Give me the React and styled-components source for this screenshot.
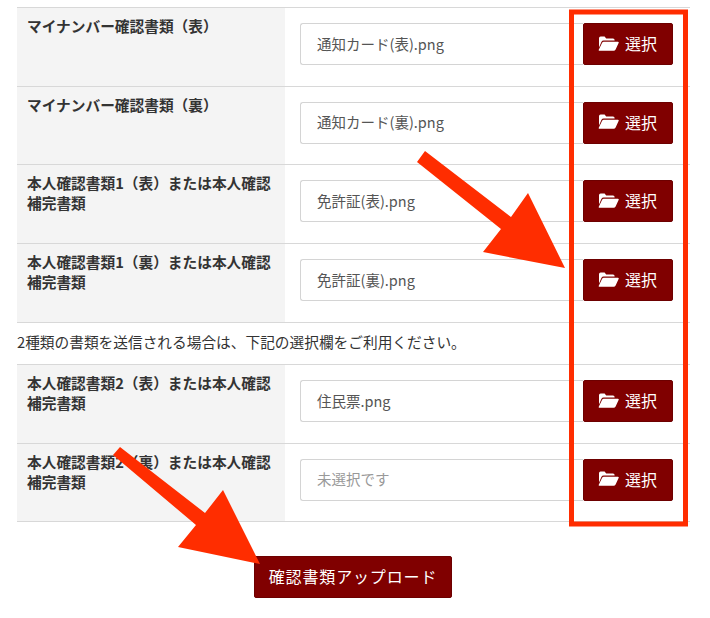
import React from "react";
import styled, { createGlobalStyle } from "styled-components";

const GlobalStyle = createGlobalStyle`
  html, body {
    margin: 0;
    padding: 0;
    background: #fff;
  }
  body {
    font-family: "Noto Sans CJK JP", "Liberation Sans", sans-serif;
    color: #333;
  }
`;

const Page = styled.div`
  position: relative;
  width: 710px;
  height: 618px;
  overflow: hidden;
  box-sizing: border-box;
  padding: 7px 20px 0 17px;
`;

const Row = styled.div`
  display: grid;
  grid-template-columns: 268px 1fr;
  height: 78.7px;
  box-sizing: border-box;
  border-top: 1px solid #d8d8d8;
  &.last {
    height: 79.2px;
    border-bottom: 1px solid #d8d8d8;
  }
`;

const Label = styled.div`
  background: #f4f4f4;
  padding: 8px 10px 0;
  font-size: 14.7px;
  line-height: 20px;
  font-weight: 700;
  color: #333;
`;

const Field = styled.div`
  display: flex;
  align-items: flex-start;
  padding: 15px 17px 0 15px;
`;

const FileName = styled.div`
  flex: 1;
  height: 42px;
  box-sizing: border-box;
  padding: 0 16px 2px;
  display: flex;
  align-items: center;
  border: 1px solid #d4d4d4;
  border-right: 0;
  border-radius: 3px 0 0 3px;
  font-size: 14.5px;
  color: ${(props) => (props.$empty ? "#999" : "#555")};
`;

const Button = styled.button`
  display: inline-flex;
  align-items: center;
  justify-content: center;
  height: 42px;
  box-sizing: border-box;
  padding: 0 0 2px;
  border: 1px solid #6d0000;
  border-radius: 2px;
  background: #800000;
  color: #fff;
  font-family: inherit;
  font-size: 16px;
  line-height: 1;
`;

const PickButton = styled(Button)`
  width: 90px;
  gap: 6px;
  svg {
    width: 21px;
    height: 17px;
    margin-left: -1px;
  }
`;

const Note = styled.div`
  height: 42.4px;
  box-sizing: border-box;
  border-top: 1px solid #d8d8d8;
  padding-bottom: 3px;
  display: flex;
  align-items: center;
  font-size: 14.7px;
  color: #333;
`;

const Actions = styled.div`
  display: flex;
  justify-content: center;
  padding: 33.9px 2px 0 0;
`;

const UploadButton = styled(Button)`
  width: 198px;
  padding-left: 1px;
  letter-spacing: 0.85px;
`;

// red marks drawn over the page in the screenshot
const Marks = styled.svg`
  position: absolute;
  left: 0;
  top: 0;
  pointer-events: none;
`;

const FolderIcon = () => (
  <svg viewBox="0 0 21 17" fill="#fff" aria-hidden="true">
    <path d="M1 12.5V3.2Q1 1.6 2.6 1.6H6.6L8.2 3.4H15Q16.6 3.4 16.6 5V5.6H5.6Q4.2 5.6 3.5 6.8Z" />
    <path d="M5.8 6.8H19.8Q21.2 6.8 20.6 8L17.6 14.6Q17 15.8 15.6 15.8H1.6Q0.3 15.8 0.9 14.6L4 8Q4.6 6.8 5.8 6.8Z" />
  </svg>
);

const rows = [
  { label: "マイナンバー確認書類（表）", file: "通知カード(表).png" },
  { label: "マイナンバー確認書類（裏）", file: "通知カード(裏).png" },
  { label: "本人確認書類1（表）または本人確認補完書類", file: "免許証(表).png" },
  { label: "本人確認書類1（裏）または本人確認補完書類", file: "免許証(裏).png" },
];

const extraRows = [
  { label: "本人確認書類2（表）または本人確認補完書類", file: "住民票.png" },
  { label: "本人確認書類2（裏）または本人確認補完書類", file: "" },
];

const DocRow = ({ label, file, className }) => (
  <Row className={className}>
    <Label>{label}</Label>
    <Field>
      <FileName $empty={!file}>{file || "未選択です"}</FileName>
      <PickButton>
        <FolderIcon />
        選択
      </PickButton>
    </Field>
  </Row>
);

export default function App() {
  return (
    <>
      <GlobalStyle />
      <Page>
        {rows.map((row) => (
          <DocRow key={row.label} {...row} />
        ))}
        <Note>2種類の書類を送信される場合は、下記の選択欄をご利用ください。</Note>
        <DocRow {...extraRows[0]} />
        <DocRow {...extraRows[1]} className="last" />
        <Actions>
          <UploadButton>確認書類アップロード</UploadButton>
        </Actions>
        <Marks width="710" height="618" viewBox="0 0 710 618">
          <rect x="571.5" y="12" width="114" height="512" fill="none" stroke="#ff2d00" strokeWidth="5" />
          <polygon
            fill="#ff2d00"
            points="425,151 511,217 528,193 565,268 483,252 501,229 417,162"
          />
          <polygon
            fill="#ff2d00"
            points="120,447 205,513 223,490 260,564 178,547 196,525 113,455"
          />
        </Marks>
      </Page>
    </>
  );
}
